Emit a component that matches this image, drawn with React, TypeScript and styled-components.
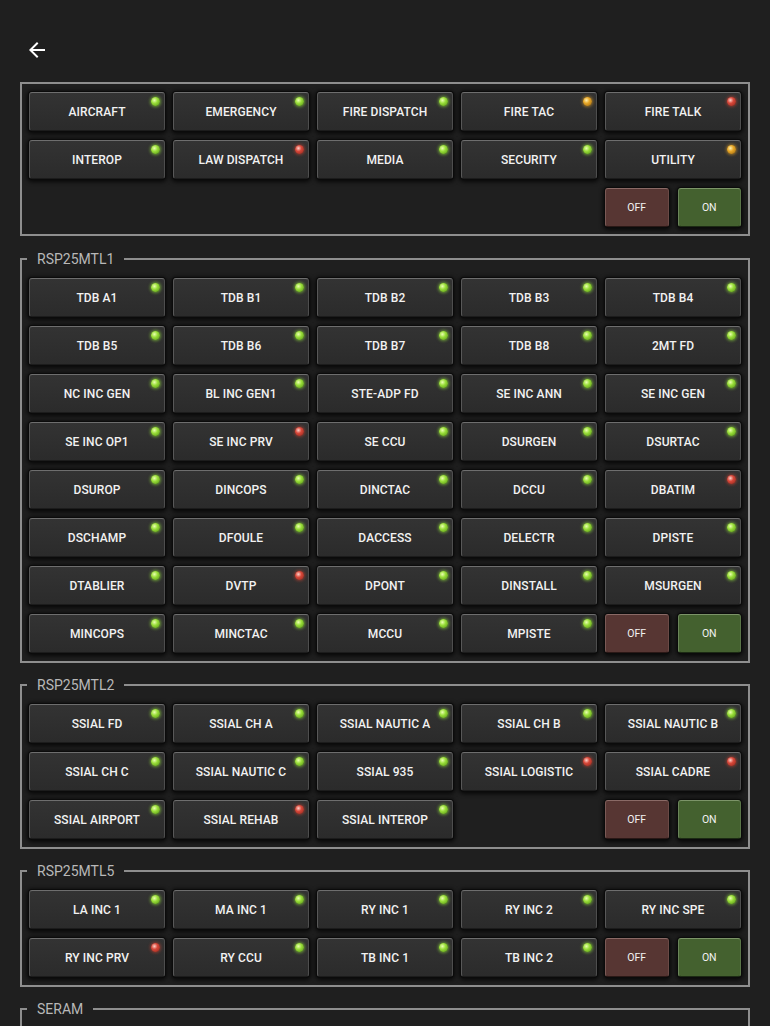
import React from "react";
import styled, { createGlobalStyle } from "styled-components";

const Global = createGlobalStyle`
  html, body { margin: 0; padding: 0; background: #1f1f1f; }
  body { font-family: Roboto, "Liberation Sans", sans-serif; color: #f0f0f0; }
  * { box-sizing: border-box; }
`;

type Led = "g" | "r" | "o";
type Item = [string, Led];

const Page = styled.div`
  min-height: 1026px;
  padding: 0 20px 40px;
  background: #1f1f1f;
`;

const Header = styled.div`
  display: flex;
  align-items: center;
  height: 24px;
  margin-top: 38px;
  margin-bottom: 20px;
  padding-left: 5px;
`;

const BackButton = styled.button`
  width: 24px;
  height: 24px;
  padding: 0;
  border: 0;
  background: transparent;
  display: flex;
  cursor: pointer;
`;

const Panel = styled.div`
  border: 2px solid #8e8e8e;
  padding: 8px 7px 7px;
  margin-bottom: 15px;
`;

const Group = styled.fieldset`
  border: 2px solid #8e8e8e;
  margin: 0 0 14px;
  padding: 11px 7px 8px;
  min-width: 0;
`;

const Legend = styled.legend`
  font-size: 14px;
  line-height: 16px;
  color: #b8b8b8;
  padding: 0 10px;
  margin-left: -2px;
  font-family: Roboto, "Liberation Sans", sans-serif;
`;

const Grid = styled.div`
  display: grid;
  grid-template-columns: repeat(5, 136px);
  column-gap: 8px;
  row-gap: 9px;
`;

const EmptyBody = styled.div`
  height: 140px;
`;

const Btn = styled.button`
  position: relative;
  height: 39px;
  border-radius: 3px;
  border: 1px solid;
  border-color: #6e6e6e #4e4e4e #1c1c1c #585858;
  background: linear-gradient(#333333, #2b2b2b);
  box-shadow: 0 0 0 1px #0b0b0b, 0 1px 4px 2px rgba(0, 0, 0, 0.75);
  color: #f2f2f2;
  font-family: Roboto, "Liberation Sans", sans-serif;
  font-weight: 500;
  font-size: 12px;
  letter-spacing: 0.1px;
  padding: 0;
  cursor: pointer;
`;

const ledColors: Record<Led, [string, string, string, string]> = {
  g: ["#eaffb0", "#9ade3a", "#4c8a10", "rgba(150,230,60,0.55)"],
  r: ["#ffd0c8", "#d8483a", "#8a2318", "rgba(230,70,50,0.45)"],
  o: ["#fff0b0", "#e8a828", "#96600c", "rgba(240,170,40,0.5)"],
};

const Lamp = styled.span<{ $c: Led }>`
  position: absolute;
  top: 4px;
  right: 4px;
  width: 9px;
  height: 9px;
  border-radius: 50%;
  background: ${(p) => {
    const c = ledColors[p.$c];
    return `radial-gradient(circle at 38% 36%, ${c[0]} 0, ${c[1]} 38%, ${c[2]} 100%)`;
  }};
  box-shadow: 0 0 3px 1px ${(p) => ledColors[p.$c][3]};
`;

const SwitchCell = styled.div`
  grid-column: 5;
  display: flex;
  gap: 9px;
`;

const SwitchBtn = styled(Btn)<{ $on?: boolean }>`
  flex: 1;
  font-size: 10.5px;
  font-weight: 400;
  letter-spacing: 0;
  background: ${(p) => (p.$on ? "#44612f" : "#573633")};
  border-color: ${(p) =>
    p.$on ? "#7c9468 #5a7548 #1c2a14 #6a845a" : "#8a6a66 #6a4a46 #2a1816 #7a5a56"};
`;

const Tile = ({ label, led }: { label: string; led: Led }) => (
  <Btn>
    {label}
    <Lamp $c={led} />
  </Btn>
);

const Buttons = ({ items, toggle = true }: { items: Item[]; toggle?: boolean }) => (
  <Grid>
    {items.map(([l, c]) => (
      <Tile key={l} label={l} led={c} />
    ))}
    {toggle && (
      <SwitchCell>
        <SwitchBtn>OFF</SwitchBtn>
        <SwitchBtn $on>ON</SwitchBtn>
      </SwitchCell>
    )}
  </Grid>
);

const top: Item[] = [
  ["AIRCRAFT", "g"], ["EMERGENCY", "g"], ["FIRE DISPATCH", "g"], ["FIRE TAC", "o"], ["FIRE TALK", "r"],
  ["INTEROP", "g"], ["LAW DISPATCH", "r"], ["MEDIA", "g"], ["SECURITY", "g"], ["UTILITY", "o"],
];

const mtl1: Item[] = [
  ["TDB A1", "g"], ["TDB B1", "g"], ["TDB B2", "g"], ["TDB B3", "g"], ["TDB B4", "g"],
  ["TDB B5", "g"], ["TDB B6", "g"], ["TDB B7", "g"], ["TDB B8", "g"], ["2MT FD", "g"],
  ["NC INC GEN", "g"], ["BL INC GEN1", "g"], ["STE-ADP FD", "g"], ["SE INC ANN", "g"], ["SE INC GEN", "g"],
  ["SE INC OP1", "g"], ["SE INC PRV", "r"], ["SE CCU", "g"], ["DSURGEN", "g"], ["DSURTAC", "g"],
  ["DSUROP", "g"], ["DINCOPS", "g"], ["DINCTAC", "g"], ["DCCU", "g"], ["DBATIM", "r"],
  ["DSCHAMP", "g"], ["DFOULE", "g"], ["DACCESS", "g"], ["DELECTR", "g"], ["DPISTE", "g"],
  ["DTABLIER", "g"], ["DVTP", "r"], ["DPONT", "g"], ["DINSTALL", "g"], ["MSURGEN", "g"],
  ["MINCOPS", "g"], ["MINCTAC", "g"], ["MCCU", "g"], ["MPISTE", "g"],
];

const mtl2: Item[] = [
  ["SSIAL FD", "g"], ["SSIAL CH A", "g"], ["SSIAL NAUTIC A", "g"], ["SSIAL CH B", "g"], ["SSIAL NAUTIC B", "g"],
  ["SSIAL CH C", "g"], ["SSIAL NAUTIC C", "g"], ["SSIAL 935", "g"], ["SSIAL LOGISTIC", "r"], ["SSIAL CADRE", "r"],
  ["SSIAL AIRPORT", "g"], ["SSIAL REHAB", "r"], ["SSIAL INTEROP", "g"],
];

const mtl5: Item[] = [
  ["LA INC 1", "g"], ["MA INC 1", "g"], ["RY INC 1", "g"], ["RY INC 2", "g"], ["RY INC SPE", "g"],
  ["RY INC PRV", "r"], ["RY CCU", "g"], ["TB INC 1", "g"], ["TB INC 2", "g"],
];

const Section = ({ title, items }: { title: string; items: Item[] }) => (
  <Group>
    <Legend>{title}</Legend>
    <Buttons items={items} />
  </Group>
);

export default function App() {
  return (
    <>
      <Global />
      <Page>
        <Header>
          <BackButton aria-label="Back">
            <svg width="24" height="24" viewBox="0 0 24 24" fill="#ffffff">
              <path d="M20 11H7.83l5.59-5.59L12 4l-8 8 8 8 1.41-1.41L7.83 13H20v-2z" />
            </svg>
          </BackButton>
        </Header>
        <Panel>
          <Buttons items={top} />
        </Panel>
        <Section title="RSP25MTL1" items={mtl1} />
        <Section title="RSP25MTL2" items={mtl2} />
        <Section title="RSP25MTL5" items={mtl5} />
        <Group>
          <Legend>SERAM</Legend>
          <EmptyBody />
        </Group>
      </Page>
    </>
  );
}
